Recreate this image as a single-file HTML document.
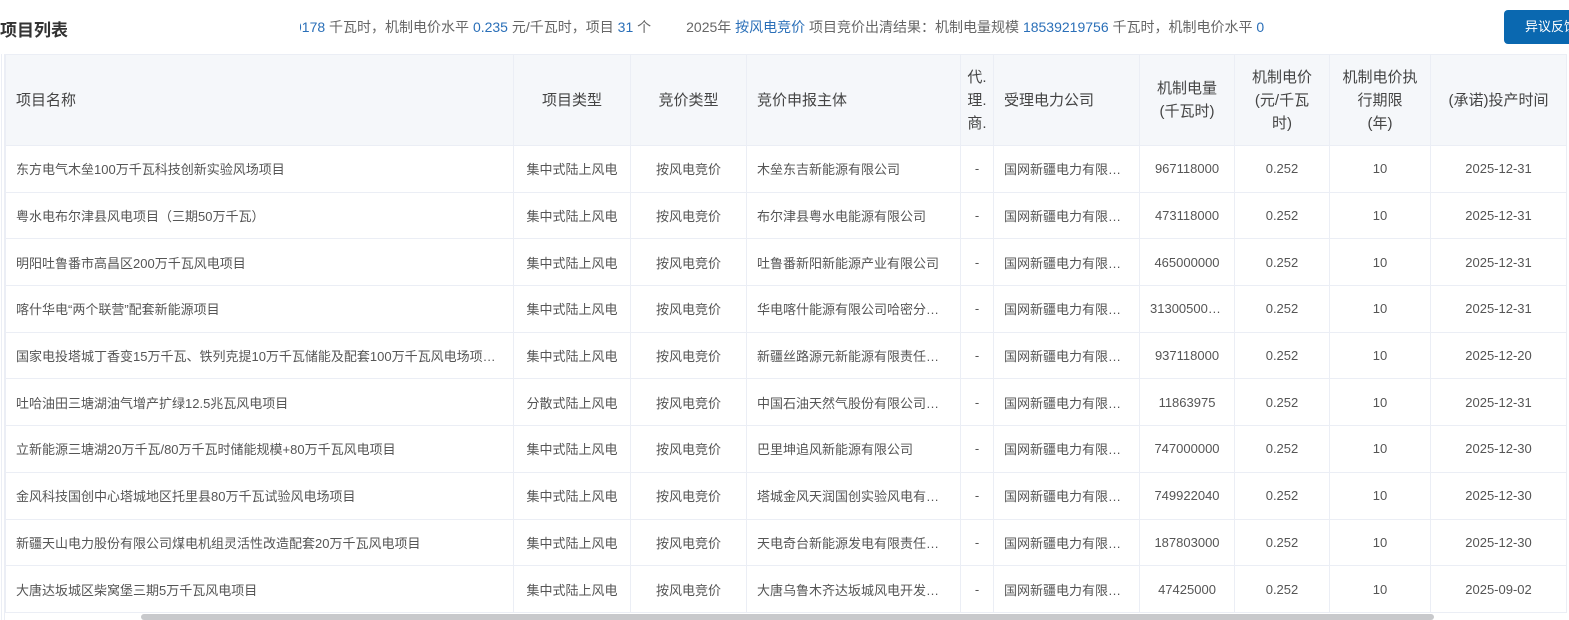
<!DOCTYPE html>
<html><head><meta charset="utf-8"><style>
*{margin:0;padding:0;box-sizing:border-box}
body{width:1569px;height:620px;overflow:hidden;background:#fff;font-family:"Liberation Sans","Noto Sans CJK SC",sans-serif;color:#555;position:relative}
.title{position:absolute;left:0;top:16px;font-size:17px;font-weight:bold;color:#333}
.ticker{position:absolute;left:300px;top:17px;width:964px;overflow:hidden;white-space:nowrap;font-size:14px;color:#666}
.ticker span{display:inline-block;margin-left:-6px}
.ticker b{font-weight:normal;color:#2a6fb8}
.btn{position:absolute;left:1504px;top:10px;width:80px;height:34px;background:#0a68b0;border-radius:4px;color:#fff;font-size:13px;line-height:34px;padding-left:21px}
table{position:absolute;left:5px;top:54px;border-collapse:collapse;table-layout:fixed;width:1561px}
td,th{border:1px solid #ebeef5;font-size:13px;text-align:center;white-space:nowrap;overflow:hidden;text-overflow:ellipsis;padding:0 10px;height:46.7px;font-weight:normal}
th{background:#f5f7fa;font-size:15px;color:#444;height:91px;line-height:23px;white-space:normal}
.l{text-align:left}
.lb{position:absolute;top:54px;height:566px;border-right:1px solid #ebeef5;border-left:1px solid #ebeef5;left:1px;width:4px}
.sb{position:absolute;left:141px;top:614px;width:1293px;height:6px;background:#c8c9cc;border-radius:3px}
</style></head><body>
<div class="title">项目列表</div>
<div class="ticker"><span><b>9178</b> 千瓦时，机制电价水平 <b>0.235</b> 元/千瓦时，项目 <b>31</b> 个<span style="display:inline-block;width:41px"></span>2025年 <b>按风电竞价</b> 项目竞价出清结果：机制电量规模 <b>18539219756</b> 千瓦时，机制电价水平 <b>0.235</b></span></div>
<div class="btn">异议反馈</div>
<div class="lb"></div>
<table>
<colgroup><col style="width:508px"><col style="width:117px"><col style="width:116px"><col style="width:214px"><col style="width:33px"><col style="width:146px"><col style="width:95px"><col style="width:95px"><col style="width:101px"><col style="width:136px"></colgroup>
<tr><th class="l">项目名称</th><th>项目类型</th><th>竞价类型</th><th class="l">竞价申报主体</th><th style="padding:0 2px">代.<br>理.<br>商.</th><th class="l">受理电力公司</th><th>机制电量<br>(千瓦时)</th><th style="padding:0 14px">机制电价<br>(元/千瓦<br>时)</th><th style="padding:0 8px">机制电价执行期限<br>(年)</th><th style="padding:0 4px">(承诺)投产时间</th></tr>
<tr><td class="l">东方电气木垒100万千瓦科技创新实验风场项目</td><td>集中式陆上风电</td><td>按风电竞价</td><td class="l">木垒东吉新能源有限公司</td><td style="padding:0">-</td><td class="l">国网新疆电力有限公司</td><td>967118000</td><td>0.252</td><td>10</td><td>2025-12-31</td></tr>
<tr><td class="l">粤水电布尔津县风电项目（三期50万千瓦）</td><td>集中式陆上风电</td><td>按风电竞价</td><td class="l">布尔津县粤水电能源有限公司</td><td style="padding:0">-</td><td class="l">国网新疆电力有限公司</td><td>473118000</td><td>0.252</td><td>10</td><td>2025-12-31</td></tr>
<tr><td class="l">明阳吐鲁番市高昌区200万千瓦风电项目</td><td>集中式陆上风电</td><td>按风电竞价</td><td class="l">吐鲁番新阳新能源产业有限公司</td><td style="padding:0">-</td><td class="l">国网新疆电力有限公司</td><td>465000000</td><td>0.252</td><td>10</td><td>2025-12-31</td></tr>
<tr><td class="l">喀什华电“两个联营”配套新能源项目</td><td>集中式陆上风电</td><td>按风电竞价</td><td class="l">华电喀什能源有限公司哈密分公司</td><td style="padding:0">-</td><td class="l">国网新疆电力有限公司</td><td>313005000000</td><td>0.252</td><td>10</td><td>2025-12-31</td></tr>
<tr><td class="l">国家电投塔城丁香变15万千瓦、铁列克提10万千瓦储能及配套100万千瓦风电场项目一期工程</td><td>集中式陆上风电</td><td>按风电竞价</td><td class="l">新疆丝路源元新能源有限责任公司</td><td style="padding:0">-</td><td class="l">国网新疆电力有限公司</td><td>937118000</td><td>0.252</td><td>10</td><td>2025-12-20</td></tr>
<tr><td class="l">吐哈油田三塘湖油气增产扩绿12.5兆瓦风电项目</td><td>分散式陆上风电</td><td>按风电竞价</td><td class="l">中国石油天然气股份有限公司吐哈油田</td><td style="padding:0">-</td><td class="l">国网新疆电力有限公司</td><td>11863975</td><td>0.252</td><td>10</td><td>2025-12-31</td></tr>
<tr><td class="l">立新能源三塘湖20万千瓦/80万千瓦时储能规模+80万千瓦风电项目</td><td>集中式陆上风电</td><td>按风电竞价</td><td class="l">巴里坤追风新能源有限公司</td><td style="padding:0">-</td><td class="l">国网新疆电力有限公司</td><td>747000000</td><td>0.252</td><td>10</td><td>2025-12-30</td></tr>
<tr><td class="l">金风科技国创中心塔城地区托里县80万千瓦试验风电场项目</td><td>集中式陆上风电</td><td>按风电竞价</td><td class="l">塔城金风天润国创实验风电有限公司</td><td style="padding:0">-</td><td class="l">国网新疆电力有限公司</td><td>749922040</td><td>0.252</td><td>10</td><td>2025-12-30</td></tr>
<tr><td class="l">新疆天山电力股份有限公司煤电机组灵活性改造配套20万千瓦风电项目</td><td>集中式陆上风电</td><td>按风电竞价</td><td class="l">天电奇台新能源发电有限责任公司</td><td style="padding:0">-</td><td class="l">国网新疆电力有限公司</td><td>187803000</td><td>0.252</td><td>10</td><td>2025-12-30</td></tr>
<tr><td class="l">大唐达坂城区柴窝堡三期5万千瓦风电项目</td><td>集中式陆上风电</td><td>按风电竞价</td><td class="l">大唐乌鲁木齐达坂城风电开发有限公司</td><td style="padding:0">-</td><td class="l">国网新疆电力有限公司</td><td>47425000</td><td>0.252</td><td>10</td><td>2025-09-02</td></tr>
</table>
<div class="sb"></div>
</body></html>
